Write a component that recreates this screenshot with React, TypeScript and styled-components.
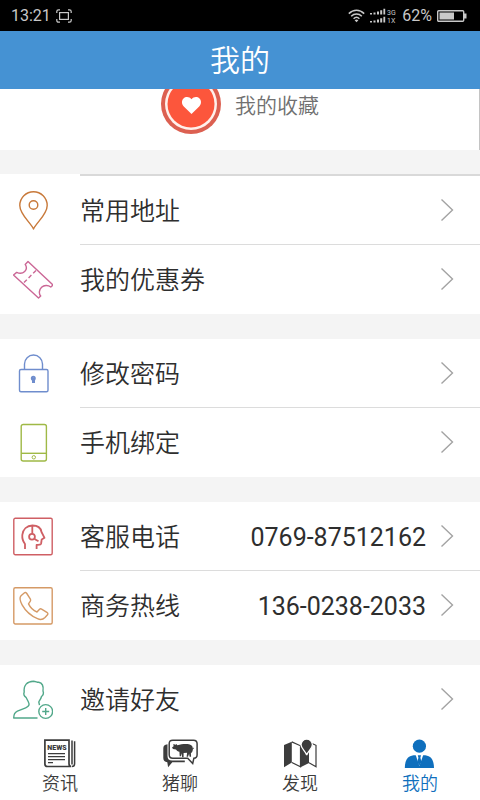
import React from "react";
import styled, { createGlobalStyle } from "styled-components";

const GlobalStyle = createGlobalStyle`
  *, *::before, *::after { box-sizing: border-box; }
  body {
    margin: 0;
    background: #f4f4f4;
    color: #2e2e2e;
    font-family: Roboto, "Noto Sans CJK SC", sans-serif;
  }
  a { color: inherit; text-decoration: none; }
  button {
    border: 0;
    padding: 0;
    background: none;
    color: inherit;
    font: inherit;
    cursor: pointer;
  }
  h1 { margin: 0; }
  svg { display: block; flex: none; }
`;

const Screen = styled.div`
  min-height: 100vh;
  display: flex;
  flex-direction: column;
`;

const StatusBar = styled.div`
  height: 31px;
  padding: 1px 13px 0 11px;
  display: flex;
  align-items: center;
  justify-content: space-between;
  background: #000;
  color: #c8c8c8;
  font-size: 16px;
  line-height: 20px;
`;

const StatusGroup = styled.div`
  display: flex;
  align-items: center;
  gap: 5px;
`;

const Header = styled.header`
  height: 58px;
  padding-top: 2px;
  display: flex;
  align-items: center;
  justify-content: center;
  background: #4592d3;
  color: #fff;
`;

const Title = styled.h1`
  font-size: 30px;
  line-height: 40px;
  font-weight: 350;
`;

const Content = styled.main`
  flex: 1;
`;

const FavoriteCard = styled.section`
  height: 61px;
  padding-bottom: 16px;
  display: flex;
  align-items: flex-end;
  justify-content: center;
  overflow: hidden;
  background: #fff;
  box-shadow: inset -1px 0 #c4c4c4;
`;

const FavoriteButton = styled.button`
  display: flex;
  align-items: center;
  gap: 14px;
  color: #707070;
  font-size: 21px;
  font-weight: 350;
  line-height: 30px;
`;

const FavoriteLabel = styled.span`
  padding-top: 3px;
`;

const Groups = styled.div`
  padding-top: 24px;
  display: flex;
  flex-direction: column;
  gap: 25px;
`;

const Group = styled.section<{ $ruled?: boolean }>`
  background: #fff;
  &::before {
    content: "";
    display: ${(p) => (p.$ruled ? "block" : "none")};
    height: 2px;
    margin-left: 80px;
    background: #d9d9d9;
  }
`;

const Row = styled.a`
  height: 69px;
  display: flex;
  align-items: stretch;
`;

const RowIcon = styled.span`
  width: 80px;
  padding-left: 13px;
  display: flex;
  align-items: center;
`;

const RowBody = styled.span`
  flex: 1;
  padding-right: 26px;
  display: flex;
  align-items: center;
  gap: 14px;
  font-size: 25px;
  line-height: 34px;
  border-bottom: 1px solid #dcdcdc;
  ${Row}:last-child & {
    border-bottom-color: transparent;
  }
`;

const RowLabel = styled.span`
  flex: 1;
  padding-top: 4px;
  font-weight: 350;
`;

const RowValue = styled.span`
  padding-top: 4px;
`;

const TabBar = styled.nav`
  position: sticky;
  bottom: 0;
  display: grid;
  grid-template-columns: repeat(4, 1fr);
  background: #fff;
`;

const Tab = styled.a<{ $active?: boolean }>`
  height: 66px;
  padding-top: 5px;
  display: flex;
  flex-direction: column;
  align-items: center;
  color: ${(p) => (p.$active ? "#0f6fbd" : "#3c3c3c")};
  font-size: 18px;
  font-weight: 350;
  line-height: 30px;
`;

const IconFrame = ({ color, children }: { color: string; children: React.ReactNode }) => (
  <svg width="40" height="40" viewBox="0 0 40 40" fill="none" stroke={color} strokeWidth="1.4" strokeLinejoin="round" aria-hidden="true">
    {children}
  </svg>
);

const PinIcon = () => (
  <IconFrame color="#c8793a">
    <path d="M20.5 38C17.5 31.5 6.8 23.5 6.8 14.5a13.7 13.7 0 0 1 27.4 0C34.2 23.5 23.5 31.5 20.5 38Z" />
    <circle cx="20.5" cy="14" r="4.3" />
  </IconFrame>
);

const CouponIcon = () => (
  <IconFrame color="#cb6796">
    <path d="M15 1.5 40 25l-2.2 2C35 24.8 31 25 28.6 27.3S25.5 33.5 27.7 36l-2.2 2L.5 15l3.2-2.6c2.8 1.3 6 1 8-.9s2.3-4.3.5-7.1Z" />
    <path d="M23 10.5 10.5 23" strokeDasharray="4 2.5" />
  </IconFrame>
);

const LockIcon = () => (
  <IconFrame color="#6f8dcd">
    <rect x="6.5" y="15.5" width="28.5" height="22.3" rx="1.5" />
    <path d="M11.5 15.5V10a9 9 0 0 1 18 0v5.5" />
    <path d="M20.5 24v5" strokeWidth="3" />
    <circle cx="20.3" cy="24.2" r="1.5" strokeWidth="2" />
  </IconFrame>
);

const MobileIcon = () => (
  <IconFrame color="#9fb946">
    <rect x="8.2" y="1.5" width="25.2" height="36.5" rx="2" />
    <path d="M8.2 30.3h25.2" />
    <circle cx="20.8" cy="34.3" r="1.7" strokeWidth="1" />
  </IconFrame>
);

const ServiceIcon = () => (
  <IconFrame color="#cf5f64">
    <rect x=".8" y="1.2" width="38.4" height="36.6" rx="1.5" />
    <path strokeWidth="1.8" d="M12 32v-5C10 24.5 9 21.5 9.3 18 9.8 12 14 8.7 19.5 8.5c5 0 8.3 2.5 9 6.5l3 5.8-2.8 1.7-.6 4c-.3 1.5-2.5 1.2-4.500 1.500V32" />
    <path strokeWidth="1.8" d="M19.3 8.5v8.3M21.5 22l4 2.3" />
    <circle cx="19" cy="19.8" r="2.9" strokeWidth="1.8" />
  </IconFrame>
);

const CallIcon = () => (
  <IconFrame color="#d59a66">
    <rect x=".8" y="1.7" width="38.4" height="36.3" rx="1.5" />
    <path d="M11.2 7 8 9.8c-1.6 1.7-.8 5.500 1.100 9C12 24 18.500 30 24.500 32.700c3.200 1.500 5.300 1 7.500-1.200l2.500-2.700c.7-1 .4-1.900-.6-2.500l-5.300-3.200c-.8-.5-1.600-.3-2.300.4L24 26C21 24.800 17 21 15.500 17.900l1.700-2.500c.6-.8.6-1.500.2-2.300L13.800 7.500c-.7-1.100-1.700-1.300-2.600-.5Z" />
  </IconFrame>
);

const InviteIcon = () => (
  <IconFrame color="#52a88a">
    <path d="M24.500 38H.7c0-4 .8-5.400 3.700-6.800l8.300-3.400c3.500-1.500 4.100-3.100 2.600-6L13 17.300c-2-1.300-2.500-3.500-1.800-5.300C10.500 5 14 1.600 20.500 1.300c2.500 0 3 1 5.200 1 3.600.7 5 3.700 4.300 8.700.8 2-.2 4.500-1.500 5.500-.6 2.500-2 4-2.700 5.500l.7 3.200" />
    <circle cx="32.700" cy="31.500" r="6.900" />
    <path d="M32.700 28v7M29.200 31.500h7" />
  </IconFrame>
);

const Chevron = () => (
  <svg width="14" height="24" viewBox="0 0 14 24" fill="none" stroke="#a3a3a3" strokeWidth="1.4" aria-hidden="true">
    <path d="M1.500 1.500 12.500 12 1.500 22.500" />
  </svg>
);

const HeartBadge = () => (
  <svg width="60" height="60" viewBox="0 0 60 60" aria-hidden="true">
    <circle cx="30" cy="30" r="30" fill="#dc6051" />
    <circle cx="30" cy="30" r="26" fill="#fff0eb" />
    <circle cx="30" cy="30" r="23.5" fill="#fc563c" />
    <path fill="#fff" d="M30.500 40 22.800 32.500C20.500 30 20.400 26.500 22.500 24.500c2.300-2.200 6-1.800 8 .8 2-2.600 5.700-3 8-.8 2.100 2 2 5.500-.3 8Z" />
  </svg>
);

const CaptureIcon = () => (
  <svg width="16" height="14" viewBox="0 0 16 14" fill="none" stroke="#c8c8c8" strokeWidth="1.2" aria-hidden="true">
    <rect x="3.6" y="3.6" width="8.8" height="6.8" />
    <path d="M.8 4V2.500C.8 1.500 1.500.8 2.500.8H4M12 .8h1.500c1 0 1.700.7 1.700 1.700V4M15.200 10v1.500c0 1-.7 1.700-1.700 1.700H12M4 13.200H2.500c-1 0-1.700-.7-1.700-1.700V10" />
  </svg>
);

const WifiIcon = () => (
  <svg width="17" height="14" viewBox="0 0 17 14" fill="none" stroke="#c8c8c8" strokeWidth="1.5" aria-hidden="true">
    <path d="M.8 4.600c4.500-4.400 10.900-4.400 15.400 0M3.200 7.200c3-3 7.600-3 10.600 0M5.600 9.700c1.700-1.700 4.100-1.700 5.800 0" />
    <path d="M8.500 13.300 6.600 11.300c1-1 2.800-1 3.800 0Z" fill="#c8c8c8" stroke="none" />
  </svg>
);

const SignalIcon = () => (
  <svg width="27" height="16" viewBox="0 0 27 16" fill="#c8c8c8" aria-hidden="true">
    <path d="M0 5h2v1.500H0zM3.500 4.500h2v2h-2zM7 3.500h2v3H7zM10.200 2.300h2v4.200h-2zM13.400.8h1.800v5.700h-1.800zM0 13h2v1.500H0zM3.500 12.500h2v2h-2zM7 11.500h2v3H7zM10.200 10.300h2v4.200h-2zM13.400 8.800h1.800v5.700h-1.800z" />
    <text x="17" y="6.5" fontSize="7" fontFamily="Roboto, sans-serif">3G</text>
    <text x="17" y="14.5" fontSize="7" fontFamily="Roboto, sans-serif">1X</text>
  </svg>
);

const BatteryIcon = () => (
  <svg width="30" height="12" viewBox="0 0 30 12" aria-hidden="true">
    <rect x=".7" y=".7" width="26" height="10.6" rx="1" fill="none" stroke="#c8c8c8" strokeWidth="1.4" />
    <path d="M2.500 2.500h14.500v7H2.500zM27 3.500h2.500v5H27z" fill="#c8c8c8" />
  </svg>
);

const TabFrame = ({ children }: { children: React.ReactNode }) => (
  <svg width="36" height="30" viewBox="0 0 36 30" fill="currentColor" aria-hidden="true">
    {children}
  </svg>
);

const NewsIcon = () => (
  <TabFrame>
    <path d="M2.900 1.200H27v23.300c0 2 .8 3 2.200 3H5.500c-1.700 0-2.600-.9-2.600-2.600Z" fill="none" stroke="currentColor" strokeWidth="1.7" />
    <path d="M32.600 2.300v22.400c0 1.800-1 2.800-2.700 2.800M30 1.500v24" fill="none" stroke="currentColor" strokeWidth="1.5" />
    <text x="15" y="11" fontSize="7" fontWeight="900" fontFamily="Roboto, sans-serif" textAnchor="middle">NEWS</text>
    <path d="M6 14h17v1.300H6zM6 17h17v1.200H6zM6 20h17v1.200H6zM6 23h5v1.300H6z" />
  </TabFrame>
);

const PigIcon = () => (
  <TabFrame>
    <path d="M5.500 5.200C2.500 5.500 1.300 7 1.300 9.500V19c0 2.500 1.500 4 4 4.200l.8 5 4.200-4.900h12.500v-1.800H10C7 21.500 5.500 20 5.500 17Z" />
    <path d="M10.700 1.200h20.800c2.300 0 3.600 1.200 3.600 3.500v11c0 2.300-1 3.400-3.200 3.500l-1.200 5.300-5-5.300h-15c-2.300 0-3.500-1.200-3.500-3.500v-11c0-2.300 1.200-3.500 3.500-3.500Z" fill="#fff" stroke="currentColor" strokeWidth="1.5" />
    <path d="M10 8.500 11.600 7.200 11.300 5l2.400.8.800-.8.800 1.200c4.500-1.300 9-1.700 12.500-.8 2.200.7 3 2 3 4l1-.8.2.6-1.100 1.100c-.2 2-.8 3-2 4l.2 3.500h-1.500l-.5-3-1.100 3h-1.400l.5-4-3.500.1v4.400h-1.500l-.3-4-.8 3h-1.300l-.3-4.500c-1.500-.4-2.800-1.400-3.400-2.400l-3-.3Z" />
  </TabFrame>
);

const MapIcon = () => (
  <TabFrame>
    <path d="M2 6 9.800 2.700v20.800L2 28.200ZM18.500 6.800 27 11v13L18.500 28.200Z" />
    <path d="M9.800 2.900 18.500 6.800v21L9.800 23.500M27 23.800l7 4V6.300l-4-1.800" fill="none" stroke="currentColor" strokeWidth="1.2" />
    <path d="M24.700 16.200c-1-4-5.700-6.500-5.700-10.500a5.700 5.700 0 0 1 11.400 0c0 4-4.700 6.500-5.700 10.500Z" stroke="#fff" strokeWidth="1.3" />
  </TabFrame>
);

const ProfileIcon = () => (
  <TabFrame>
    <circle cx="17.4" cy="7.2" r="6.6" />
    <path d="M2.800 29C3 21.500 5 17.300 11.500 16.200h11.800C29.800 17.300 31.800 21.500 32 29Z" />
    <path d="M13.700 16 17.400 27 21.200 16Z" fill="#fff" />
    <path d="M15.800 16.300h3.200L18.400 18.800 19.500 23l-2.100 3.500L15.300 23l1.100-4.200Z" />
  </TabFrame>
);

type Item = { label: string; value?: string; href: string; icon: React.ReactNode };

const groups: Item[][] = [
  [
    { label: "常用地址", href: "#address", icon: <PinIcon /> },
    { label: "我的优惠券", href: "#coupons", icon: <CouponIcon /> },
  ],
  [
    { label: "修改密码", href: "#password", icon: <LockIcon /> },
    { label: "手机绑定", href: "#mobile", icon: <MobileIcon /> },
  ],
  [
    { label: "客服电话", value: "0769-87512162", href: "tel:076987512162", icon: <ServiceIcon /> },
    { label: "商务热线", value: "136-0238-2033", href: "tel:13602382033", icon: <CallIcon /> },
  ],
  [{ label: "邀请好友", href: "#invite", icon: <InviteIcon /> }],
];

const tabs = [
  { label: "资讯", href: "#news", icon: <NewsIcon /> },
  { label: "猪聊", href: "#chat", icon: <PigIcon /> },
  { label: "发现", href: "#discover", icon: <MapIcon /> },
  { label: "我的", href: "#me", icon: <ProfileIcon />, active: true },
];

export default function App() {
  return (
    <Screen lang="zh-CN">
      <GlobalStyle />
      <StatusBar>
        <StatusGroup>
          <span>13:21</span>
          <CaptureIcon />
        </StatusGroup>
        <StatusGroup>
          <WifiIcon />
          <SignalIcon />
          <span>62%</span>
          <BatteryIcon />
        </StatusGroup>
      </StatusBar>
      <Header>
        <Title>我的</Title>
      </Header>
      <Content>
        <FavoriteCard>
          <FavoriteButton type="button">
            <HeartBadge />
            <FavoriteLabel>我的收藏</FavoriteLabel>
          </FavoriteButton>
        </FavoriteCard>
        <Groups>
          {groups.map((items, index) => (
            <Group key={items[0].label} $ruled={index === 0}>
              {items.map((item) => (
                <Row key={item.label} href={item.href}>
                  <RowIcon>{item.icon}</RowIcon>
                  <RowBody>
                    <RowLabel>{item.label}</RowLabel>
                    {item.value && <RowValue>{item.value}</RowValue>}
                    <Chevron />
                  </RowBody>
                </Row>
              ))}
            </Group>
          ))}
        </Groups>
      </Content>
      <TabBar>
        {tabs.map((tab) => (
          <Tab key={tab.label} href={tab.href} $active={tab.active} aria-current={tab.active ? "page" : undefined}>
            {tab.icon}
            {tab.label}
          </Tab>
        ))}
      </TabBar>
    </Screen>
  );
}
